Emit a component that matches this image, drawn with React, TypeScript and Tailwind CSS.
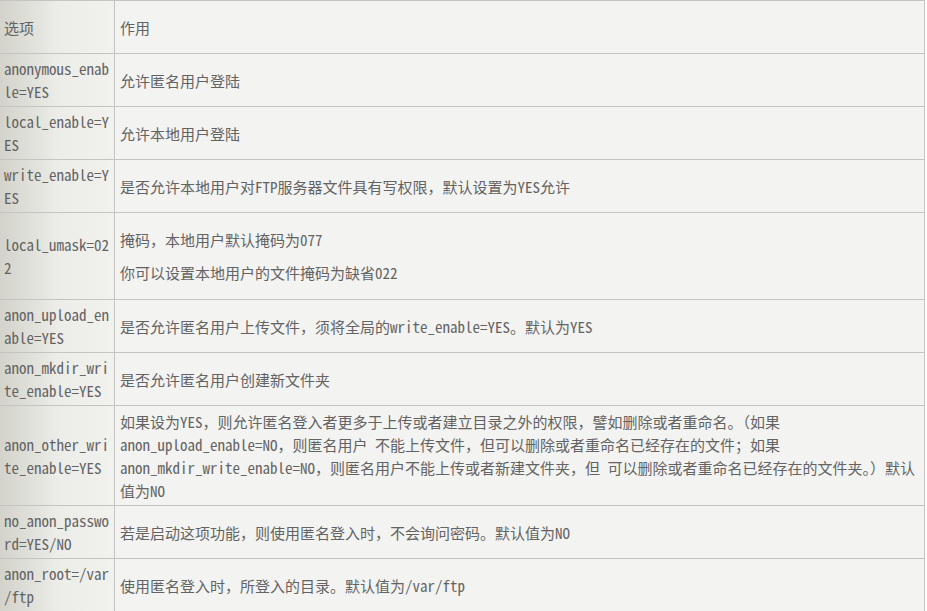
const rows: { key: string[]; desc: string[][] }[] = [
  { key: ["选项"], desc: [["作用"]] },
  { key: ["anonymous_enab", "le=YES"], desc: [["允许匿名用户登陆"]] },
  { key: ["local_enable=Y", "ES"], desc: [["允许本地用户登陆"]] },
  {
    key: ["write_enable=Y", "ES"],
    desc: [["是否允许本地用户对FTP服务器文件具有写权限，默认设置为YES允许"]],
  },
  {
    key: ["local_umask=02", "2"],
    desc: [["掩码，本地用户默认掩码为077"], ["你可以设置本地用户的文件掩码为缺省022"]],
  },
  {
    key: ["anon_upload_en", "able=YES"],
    desc: [["是否允许匿名用户上传文件，须将全局的write_enable=YES。默认为YES"]],
  },
  { key: ["anon_mkdir_wri", "te_enable=YES"], desc: [["是否允许匿名用户创建新文件夹"]] },
  {
    key: ["anon_other_wri", "te_enable=YES"],
    desc: [
      [
        "如果设为YES，则允许匿名登入者更多于上传或者建立目录之外的权限，譬如删除或者重命名。（如果",
        "anon_upload_enable=NO，则匿名用户 不能上传文件，但可以删除或者重命名已经存在的文件；如果",
        "anon_mkdir_write_enable=NO，则匿名用户不能上传或者新建文件夹，但 可以删除或者重命名已经存在的文件夹。）默认",
        "值为NO",
      ],
    ],
  },
  {
    key: ["no_anon_passwo", "rd=YES/NO"],
    desc: [["若是启动这项功能，则使用匿名登入时，不会询问密码。默认值为NO"]],
  },
  { key: ["anon_root=/var", "/ftp"], desc: [["使用匿名登入时，所登入的目录。默认值为/var/ftp"]] },
];

export default function App() {
  return (
    <div className="h-[611px] w-[927px] overflow-hidden bg-white">
      <div
        className="grid w-[925px] grid-cols-[115px_1fr] border-t border-r border-[#c4c4c2] bg-[#f3f3f1] text-[15px] leading-[23px] text-[#636363]"
        style={{ fontFamily: '"Noto Sans Mono CJK SC", "Noto Sans CJK SC", "Liberation Mono", monospace' }}
      >
        {rows.map((row, i) => {
          const lines = row.desc.reduce((n, p) => n + p.length, 0);
          return (
            <div key={i} className="contents">
              <div
                className={`flex flex-col justify-center whitespace-nowrap border-r border-b border-[#c4c4c2] bg-gradient-to-r from-[#d3d3cb] via-[#ecece8] to-[#f1f1ee] py-[3px] pl-[4px] ${
                  i === 0 ? "min-h-[53px]" : ""
                }`}
              >
                {row.key.map((l) => (
                  <span key={l}>{l}</span>
                ))}
              </div>
              <div
                className={`flex flex-col justify-center gap-[10px] overflow-hidden whitespace-nowrap border-b border-[#c4c4c2] pl-[5px] ${
                  row.desc.length > 1 ? "py-[15px]" : lines > 2 ? "pt-[4px] pb-[3px]" : "py-[3px]"
                }`}
              >
                {row.desc.map((p, j) => (
                  <p key={j} className="flex flex-col">
                    {p.map((l) => (
                      <span key={l}>{l}</span>
                    ))}
                  </p>
                ))}
              </div>
            </div>
          );
        })}
      </div>
    </div>
  );
}
